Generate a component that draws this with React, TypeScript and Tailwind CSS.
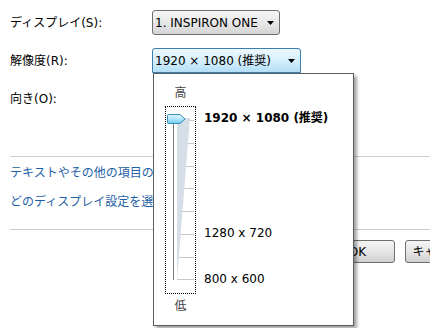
import React from "react";

const FONT = { fontFamily: '"DejaVu Sans", "Noto Sans CJK JP", sans-serif' };

function Arrow() {
  return (
    <svg width="7" height="4" viewBox="0 0 7 4" className="shrink-0">
      <path d="M0 0h7L3.5 4z" fill="#000" />
    </svg>
  );
}

function Slider() {
  // tick rows, in the coordinates of the dotted box
  const ticks = [13, 36, 59, 81, 104, 127, 150, 172];
  const edge = (y: number) => 24 - ((y - 11) * 13) / 162;
  return (
    <svg width="29" height="186" viewBox="0 0 29 186">
      <defs>
        <linearGradient id="thumb" x1="0" y1="0" x2="0" y2="1">
          <stop offset="0" stopColor="#e4f7fe" />
          <stop offset="0.5" stopColor="#aee6fb" />
          <stop offset="1" stopColor="#6fcbef" />
        </linearGradient>
      </defs>
      <polygon points="11,11 24,11 11,173" fill="#d6dfe7" />
      {ticks.map((y) => (
        <line key={y} x1={edge(y)} y1={y + 0.5} x2="28" y2={y + 0.5} stroke="#c4c8cc" strokeWidth="1" />
      ))}
      <line x1="7.5" y1="15" x2="7.5" y2="173" stroke="#7c7c7c" strokeWidth="1" />
      <path
        d="M2.5 7.5h11.5l5 4.5-5 4.5h-11.5a1 1 0 0 1-1-1v-7a1 1 0 0 1 1-1z"
        fill="url(#thumb)"
        stroke="#3d8db4"
        strokeWidth="1"
      />
    </svg>
  );
}

export default function App() {
  return (
    <div className="relative w-[430px] h-[328px] overflow-hidden bg-white text-[12px] text-black" style={FONT}>
      <div className="flex flex-col pt-[10px] pl-[10px]">
        <div className="flex items-center h-[25px]">
          <span className="w-[142px]">ディスプレイ(S):</span>
          <div className="flex items-center justify-between w-[128px] h-[25px] pl-[2px] pr-[5px] rounded-[3px] border border-[#707070] bg-linear-to-b from-[#f6f6f6] via-[#e8e8e8] to-[#d4d4d4]">
            <span>1. INSPIRON ONE</span>
            <Arrow />
          </div>
        </div>
        <div className="flex items-center h-[25px] mt-[13px]">
          <span className="w-[142px]">解像度(R):</span>
          <div className="flex items-center justify-between w-[149px] h-[25px] pl-[2px] pr-[5px] rounded-t-[3px] border border-[#3c7fb1] bg-linear-to-b from-[#eef8fe] via-[#d6effc] to-[#b4def7]">
            <span>1920 × 1080 (推奨)</span>
            <Arrow />
          </div>
        </div>
        <div className="flex items-center h-[25px] mt-[13px]">
          <span>向き(O):</span>
        </div>
      </div>

      <div className="ml-[10px] mt-[45px] h-px bg-[#cdcdcd]" />
      <div className="flex flex-col pl-[10px] text-[#1f5fa6] whitespace-nowrap">
        <span className="leading-[16px] mt-[8px]">テキストやその他の項目の大きさを変更します</span>
        <span className="leading-[16px] mt-[13px]">どのディスプレイ設定を選択しますか?</span>
      </div>
      <div className="ml-[10px] mt-[19px] h-px bg-[#cdcdcd]" />

      <div className="flex gap-[10px] pl-[320px] mt-[10px]">
        <button className="w-[75px] h-[23px] shrink-0 rounded-[3px] border border-[#707070] bg-linear-to-b from-[#f4f4f4] via-[#e6e6e6] to-[#d0d0d0]">
          OK
        </button>
        <button className="w-[75px] h-[23px] shrink-0 rounded-[3px] border border-[#707070] bg-linear-to-b from-[#f4f4f4] via-[#e6e6e6] to-[#d0d0d0]">
          キャンセル
        </button>
      </div>

      {/* resolution drop-down */}
      <div className="absolute left-[153px] top-[73px] w-[201px] h-[253px] border border-[#5c5c5c] bg-white shadow-[3px_3px_3px_rgba(0,0,0,0.35)]">
        <div className="flex pl-[11px] pt-[12px]">
          <div className="flex flex-col items-center w-[31px]">
            <span className="leading-[14px] text-[#444]">高</span>
            <div className="mt-[6px] w-[31px] h-[188px] border border-dotted border-black">
              <Slider />
            </div>
            <span className="leading-[14px] mt-[5px] text-[#444]">低</span>
          </div>
          <div className="flex flex-col ml-[8px] whitespace-nowrap">
            <span className="leading-[16px] mt-[24px] font-bold">1920 × 1080 (推奨)</span>
            <span className="leading-[16px] mt-[99px]">1280 x 720</span>
            <span className="leading-[16px] mt-[30px]">800 x 600</span>
          </div>
        </div>
      </div>
    </div>
  );
}
